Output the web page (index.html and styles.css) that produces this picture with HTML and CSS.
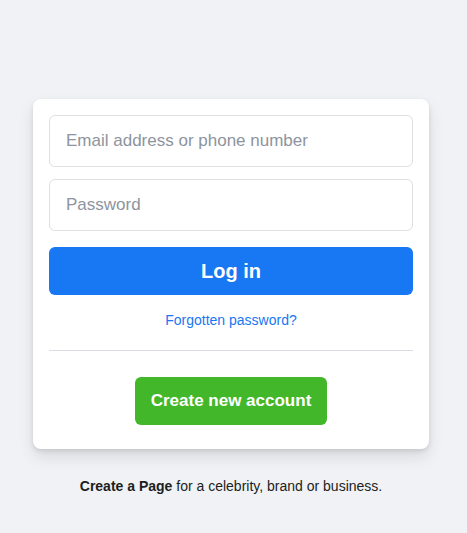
FILE: index.html
```html
<!DOCTYPE html>
<html lang="en">
<head>
  <meta charset="UTF-8">
  <title>Log in</title>
  <link rel="stylesheet" href="styles.css">
</head>
<body>

<div class="page">
  <div class="card">
    <form class="login-form">
      <input class="field" type="text" placeholder="Email address or phone number">
      <input class="field" type="password" placeholder="Password">
      <button class="login-btn" type="button">Log in</button>
    </form>
    <div class="forgot"><a href="#">Forgotten password?</a></div>
    <div class="divider"></div>
    <div class="create-wrap">
      <button class="create-btn" type="button">Create new account</button>
    </div>
  </div>
  <p class="footer-note"><a href="#">Create a Page</a> for a celebrity, brand or business.</p>
</div>

</body>
</html>
```

FILE: styles.css
```css
body { margin: 0; background: #f0f2f5; font-family: "Liberation Sans", Arial, sans-serif; color: #1c1e21; }
.page { padding: 99px 5px 0 0; }
.card { width: 364px; margin: 0 auto; background: #fff; border-radius: 8px; padding: 16px 16px 24px; box-shadow: 0 2px 4px rgba(0,0,0,0.1), 0 8px 16px rgba(0,0,0,0.1); }
.login-form { display: flex; flex-direction: column; gap: 12px; margin: 0; }
.field { box-sizing: border-box; height: 52px; width: 100%; border: 1px solid #dddfe2; border-radius: 6px; padding: 14px 16px; font-family: inherit; font-size: 17px; color: #1d2129; outline: none; }
.field::placeholder { color: #8d949e; }
.login-btn { margin-top: 4px; height: 48px; border: none; border-radius: 6px; background: #1877f2; color: #fff; font-family: inherit; font-size: 20px; font-weight: bold; cursor: pointer; }
.forgot { margin-top: 16px; text-align: center; font-size: 14px; line-height: 18px; }
.forgot a { color: #1877f2; text-decoration: none; }
.divider { margin-top: 21px; border-bottom: 1px solid #dadde1; }
.create-wrap { margin-top: 26px; text-align: center; }
.create-btn { height: 48px; padding: 0 16px; border: none; border-radius: 6px; background: #42b72a; color: #fff; font-family: inherit; font-size: 17px; font-weight: bold; cursor: pointer; }
.footer-note { margin: 28px 0 0; text-align: center; font-size: 14px; line-height: 18px; }
.footer-note a { color: #1c1e21; font-weight: bold; text-decoration: none; }
```
